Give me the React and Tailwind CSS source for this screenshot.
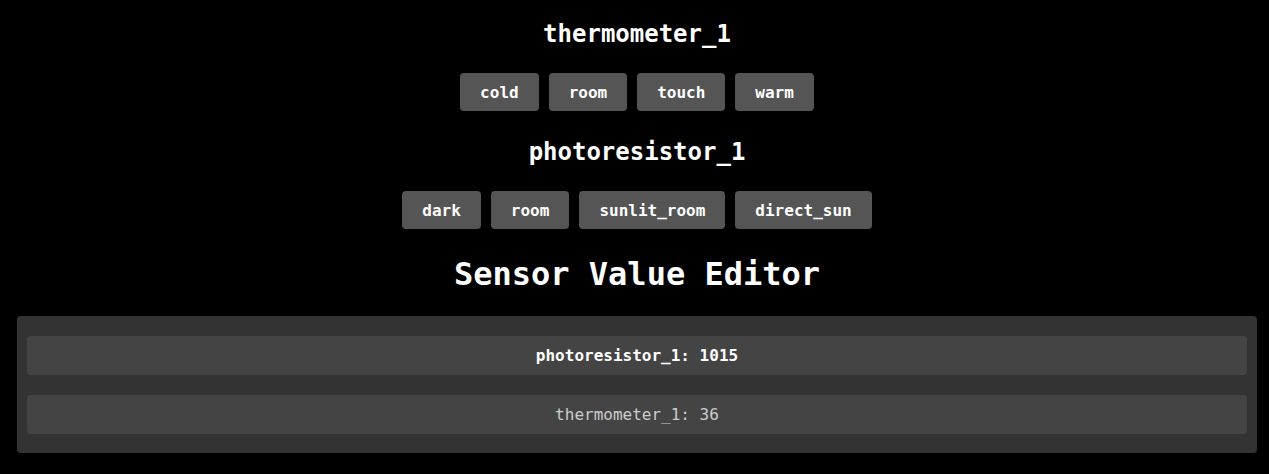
const sensors = [
  { name: "thermometer_1", presets: ["cold", "room", "touch", "warm"] },
  { name: "photoresistor_1", presets: ["dark", "room", "sunlit_room", "direct_sun"] },
];

const values = [
  { name: "photoresistor_1", value: 1015, active: true },
  { name: "thermometer_1", value: 36, active: false },
];

export default function App() {
  return (
    <div
      className="min-h-screen bg-black text-white pt-[20px] pb-[20px] pl-[5px]"
      style={{ fontFamily: '"DejaVu Sans Mono", "Liberation Mono", monospace' }}
    >
      {sensors.map((s) => (
        <div key={s.name} className="flex flex-col items-center mb-[27px]">
          <h2 className="text-[24px] leading-[28px] font-bold">{s.name}</h2>
          <div className="flex gap-[10px] mt-[25px]">
            {s.presets.map((p) => (
              <button
                key={p}
                className="h-[38px] px-[20px] bg-[#555555] rounded-[4px] text-[16px] leading-[20px] pt-[1px] text-white font-bold"
              >
                {p}
              </button>
            ))}
          </div>
        </div>
      ))}

      <h1 className="text-center text-[32px] leading-[36px] font-bold">Sensor Value Editor</h1>

      <div className="mx-[12px] mt-[24px] bg-[#333333] rounded-[4px] px-[10px] pt-[20px] pb-[19px] flex flex-col gap-[20px] shadow-[0_4px_8px_rgba(0,0,0,0.6)]">
        {values.map((v) => (
          <div
            key={v.name}
            className={`h-[39px] flex items-center justify-center bg-[#444444] rounded-[4px] text-[16px] ${
              v.active ? "font-bold text-white" : "text-[#cccccc]"
            }`}
          >
            {v.name}: {v.value}
          </div>
        ))}
      </div>
    </div>
  );
}
